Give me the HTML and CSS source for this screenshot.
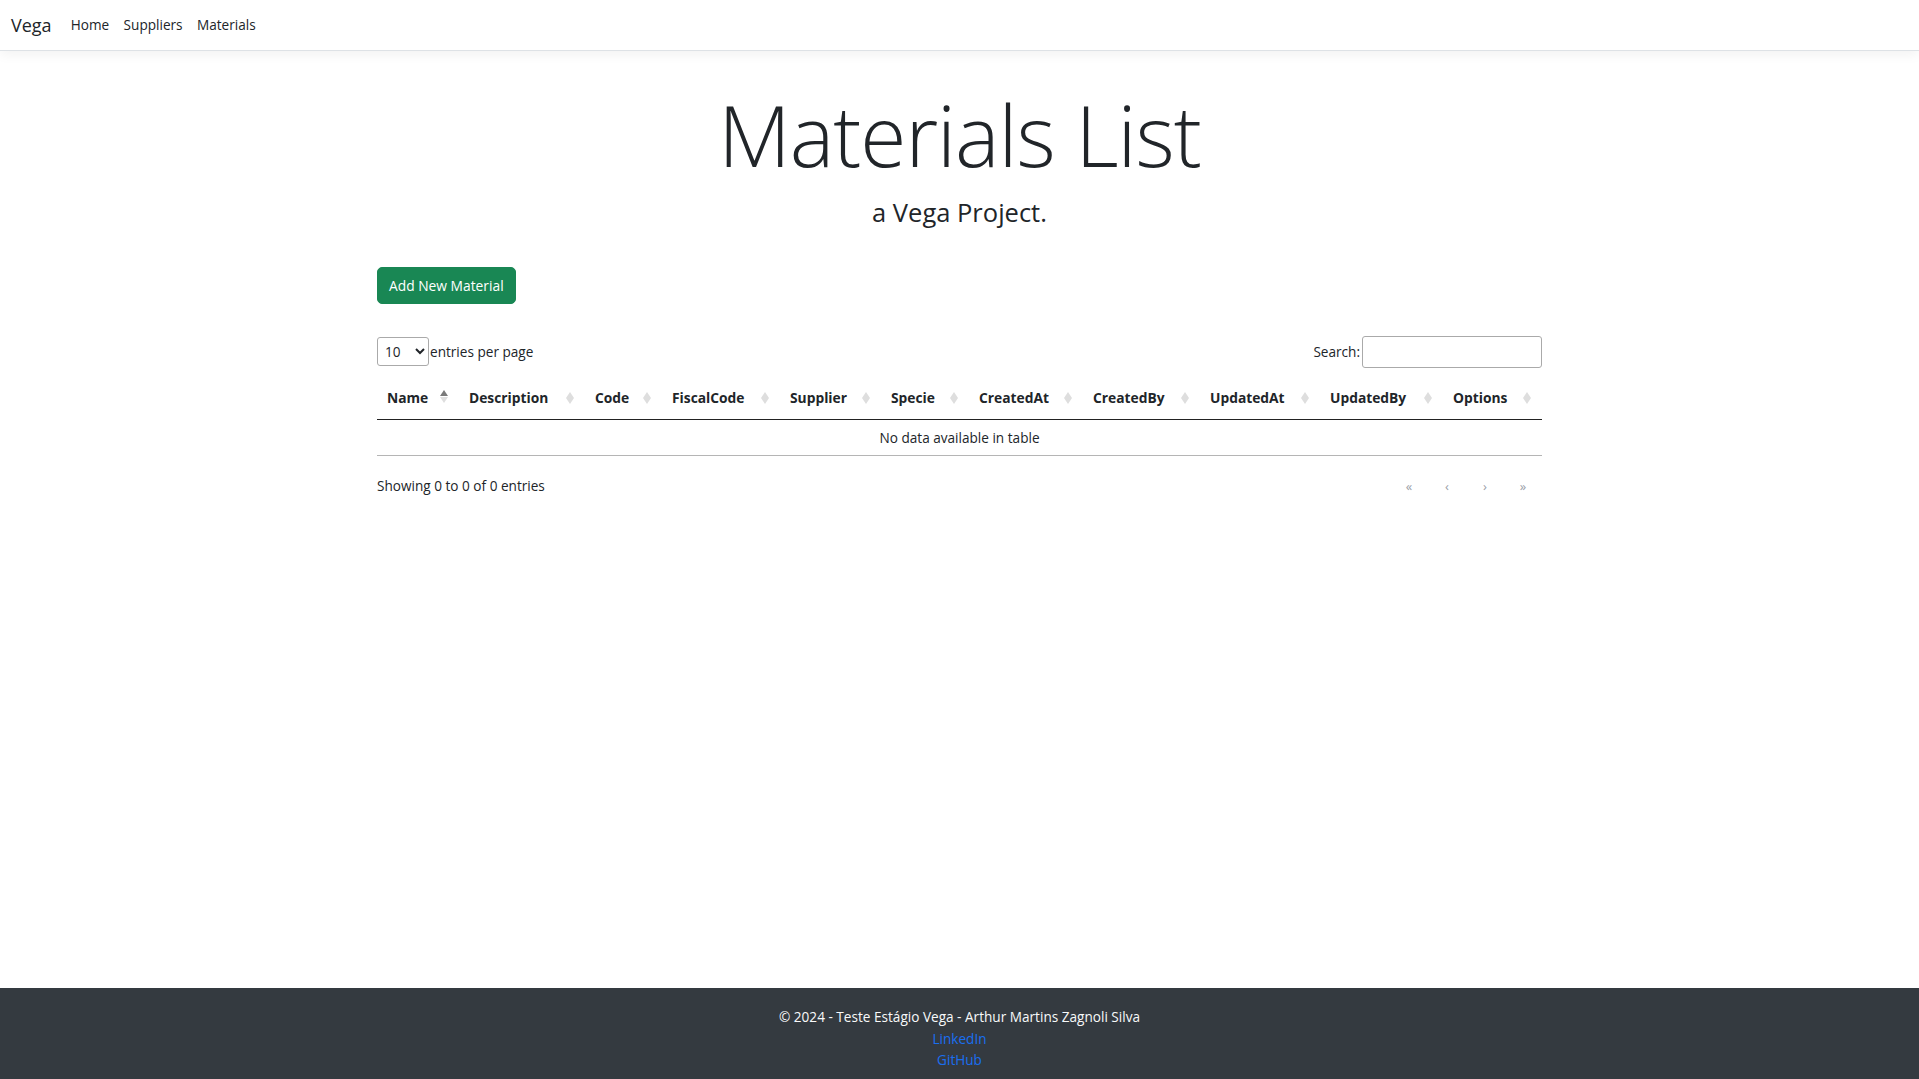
FILE: index.html
```html
<!DOCTYPE html>
<html lang="en">
<head>
<meta charset="utf-8">
<title>Materials List - Vega</title>
<link rel="stylesheet" href="styles.css">
</head>
<body>
<header class="navbar">
  <a class="brand" href="#">Vega</a>
  <nav class="nav-links">
    <a href="#">Home</a>
    <a href="#">Suppliers</a>
    <a href="#">Materials</a>
  </nav>
</header>

<main class="container">
  <div class="hero">
    <h1 class="title">Materials List</h1>
    <p class="subtitle">a Vega Project.</p>
  </div>

  <div class="actions">
    <a class="btn-success" href="#">Add New Material</a>
  </div>

  <div class="dt">
    <div class="dt-top">
      <div class="dt-length">
        <select class="dt-select"><option>10</option><option>25</option><option>50</option></select>
        <label class="dt-label">entries per page</label>
      </div>
      <div class="dt-search">
        <label class="dt-label">Search:</label>
        <input class="dt-input" type="search">
      </div>
    </div>

    <table class="dt-table">
      <thead>
        <tr>
          <th class="sorted">Name</th>
          <th>Description</th>
          <th>Code</th>
          <th>FiscalCode</th>
          <th>Supplier</th>
          <th>Specie</th>
          <th>CreatedAt</th>
          <th>CreatedBy</th>
          <th>UpdatedAt</th>
          <th>UpdatedBy</th>
          <th>Options</th>
        </tr>
      </thead>
      <tbody>
        <tr><td class="empty" colspan="11">No data available in table</td></tr>
      </tbody>
    </table>

    <div class="dt-bottom">
      <div class="dt-info">Showing 0 to 0 of 0 entries</div>
      <nav class="dt-paging">
        <button class="page-btn" disabled>«</button>
        <button class="page-btn" disabled>‹</button>
        <button class="page-btn" disabled>›</button>
        <button class="page-btn" disabled>»</button>
      </nav>
    </div>
  </div>
</main>

<footer class="footer">
  <div class="footer-line">© 2024 - Teste Estágio Vega - Arthur Martins Zagnoli Silva</div>
  <a class="footer-link" href="#">LinkedIn</a>
  <a class="footer-link" href="#">GitHub</a>
</footer>
</body>
</html>
```

FILE: styles.css
```css
* { box-sizing: border-box; }

html, body { height: 100%; }

body {
  margin: 0;
  min-height: 100vh;
  display: flex;
  flex-direction: column;
  font-family: "Open Sans", "Noto Sans", "Liberation Sans", sans-serif;
  font-size: 14.4px;
  line-height: 21.6px;
  color: #212529;
  background: #fff;
}

a { text-decoration: none; }

/* Navbar */
.navbar {
  display: flex;
  align-items: center;
  height: 51px;
  padding: 0 11px;
  border-bottom: 1px solid #dee2e6;
  box-shadow: 0 4px 11px rgba(0, 0, 0, 0.05);
  background: #fff;
}
.brand {
  font-size: 18px;
  color: #212529;
  margin-right: 12px;
  line-height: 27px;
}
.nav-links { display: flex; }
.nav-links a {
  color: #212529;
  padding: 7px 7.2px;
  font-size: 13.6px;
}

/* Main */
.container {
  width: 1165px;
  margin: 0 auto;
}

.hero {
  text-align: center;
  padding-top: 34px;
}
.title {
  margin: 0;
  font-size: 84px;
  font-weight: 300;
  line-height: 1.2;
  letter-spacing: -1px;
}
.subtitle {
  margin: 11px 0 0;
  font-size: 25.5px;
  line-height: 1.2;
}

.actions {
  margin-top: 40px;
}
.btn-success {
  display: inline-block;
  background: #198754;
  color: #fff;
  border-radius: 5px;
  padding: 6.5px 11px;
  font-size: 13.8px;
  line-height: 21.6px;
  border: 1px solid #198754;
}

/* DataTable */
.dt { margin-top: 32px; }

.dt-top {
  display: flex;
  justify-content: space-between;
  align-items: center;
  height: 32px;
}
.dt-length, .dt-search {
  display: flex;
  align-items: center;
}
.dt-select {
  width: 52px;
  height: 29px;
  border: 1px solid #aaa;
  border-radius: 3px;
  padding: 2px 3px;
  font-family: inherit;
  font-size: 13.6px;
  background: #fff;
  color: #212529;
  margin-right: 1px;
}
.dt-label { font-size: 13.6px; }
.dt-input {
  width: 180px;
  height: 32px;
  margin-left: 2px;
  border: 1px solid #aaa;
  border-radius: 3px;
  padding: 4px;
  font-family: inherit;
  font-size: 13.6px;
}

.dt-table {
  width: 100%;
  margin-top: 9px;
  border-collapse: collapse;
  table-layout: fixed;
}
.dt-table th {
  position: relative;
  text-align: left;
  font-weight: 700;
  font-size: 13.8px;
  padding: 10px 26px 10px 10px;
  line-height: 21.6px;
  border-bottom: 1px solid #222;
  white-space: nowrap;
}
.dt-table th:nth-child(1) { width: 82px; }
.dt-table th:nth-child(2) { width: 126px; }
.dt-table th:nth-child(3) { width: 77px; }
.dt-table th:nth-child(4) { width: 118px; }
.dt-table th:nth-child(5) { width: 101px; }
.dt-table th:nth-child(6) { width: 88px; }
.dt-table th:nth-child(7) { width: 114px; }
.dt-table th:nth-child(8) { width: 117px; }
.dt-table th:nth-child(9) { width: 120px; }
.dt-table th:nth-child(10) { width: 123px; }
.dt-table th:nth-child(11) { width: 99px; }

.dt-table th::before,
.dt-table th::after {
  content: "";
  position: absolute;
  right: 11px;
  width: 0;
  height: 0;
  border-left: 4.5px solid transparent;
  border-right: 4.5px solid transparent;
}
.dt-table th::before {
  top: calc(50% - 6px);
  border-bottom: 6px solid #dedede;
}
.dt-table th::after {
  top: 50%;
  border-top: 6px solid #dedede;
}
.dt-table th.sorted::before {
  top: calc(50% - 8px);
  border-bottom-color: #7a7a7a;
}
.dt-table th.sorted::after { top: calc(50% - 1px); }

.dt-table td.empty {
  text-align: center;
  padding: 7px 10px;
  font-size: 13.6px;
  border-bottom: 1px solid #b5b5b5;
}

.dt-bottom {
  display: flex;
  justify-content: space-between;
  align-items: center;
  margin-top: 18px;
}
.dt-info { font-size: 13.6px; }
.dt-paging { display: flex; }
.page-btn {
  width: 38px;
  height: 24px;
  padding: 0;
  border: 1px solid transparent;
  background: transparent;
  font-family: inherit;
  font-size: 13px;
  color: #9aa0a8;
  cursor: default;
}

/* Footer */
.footer {
  margin-top: auto;
  height: 91px;
  background: #343a40;
  color: #f8f9fa;
  display: flex;
  flex-direction: column;
  align-items: center;
  padding-top: 18px;
  font-size: 13.6px;
}
.footer-link { color: #1a6ef0; }
```
